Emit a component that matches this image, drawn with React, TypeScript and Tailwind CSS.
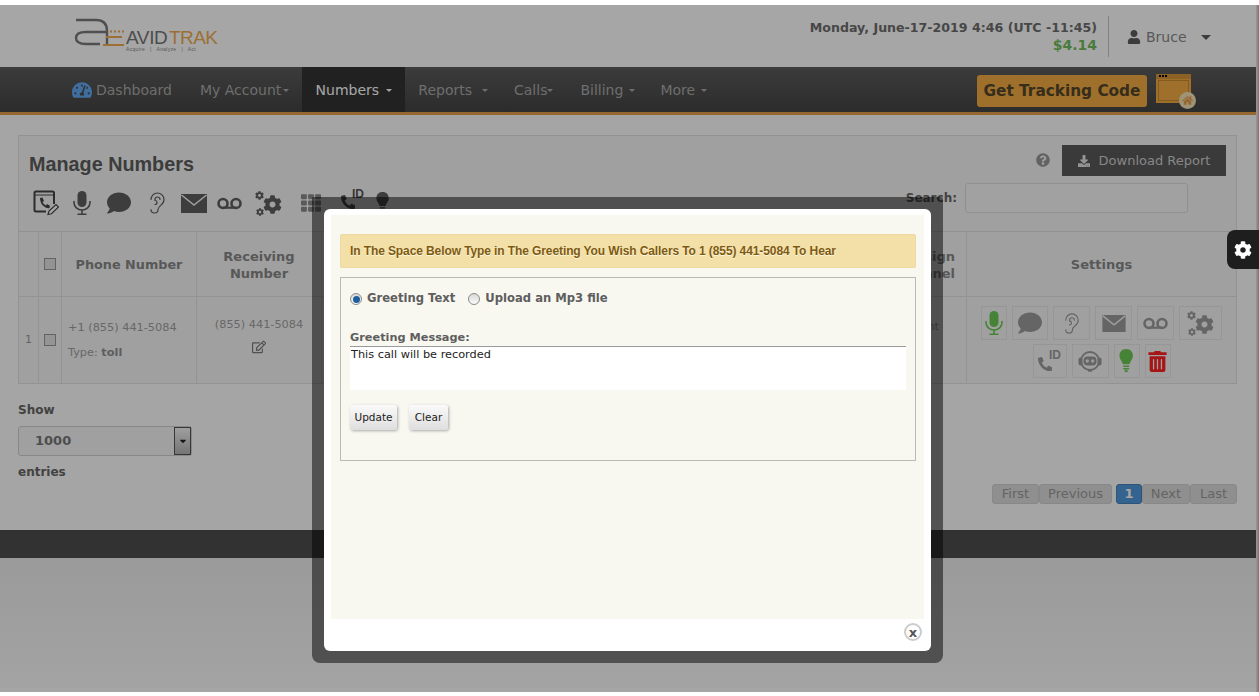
import React from "react";
import { Ear } from "lucide-react";
import {
  FaComment, FaTh, FaTrashAlt,
  FaPhoneAlt, FaTachometerAlt, FaRegEdit, FaUser, FaDownload, FaQuestionCircle, FaCog, FaHome, FaCaretDown,
} from "react-icons/fa";

function Logo() {
  return (
    <svg width="146" height="38" viewBox="0 0 146 38" className="block">
      <path d="M2 3 H22 Q33 3 33 14 V27 M33 15 H12 Q2 15 2 21 Q2 27 12 27 H26" fill="none" stroke="#7a7a7a" strokeWidth="2.4" />
      <path d="M29 28 H50 M32 20 H48" fill="none" stroke="#f0ac50" strokeWidth="2" />
      <path d="M36 14.5 H51" fill="none" stroke="#f0ac50" strokeWidth="2" strokeDasharray="2 2" />
      <text x="52" y="27" fontFamily="Liberation Sans" fontSize="19" fill="#777" letterSpacing="-0.4">AVID</text>
      <text x="95" y="27" fontFamily="Liberation Sans" fontSize="19" fill="#f0ac50" letterSpacing="-0.6">TRAK</text>
      <text x="52" y="34" fontFamily="Liberation Sans" fontSize="5" fill="#888" letterSpacing="0.3" xmlSpace="preserve">Acquire   |   Analyze   |   Act</text>
    </svg>
  );
}

function PhoneEdit() {
  return (
    <svg width="26" height="26" viewBox="0 0 26 26">
      <path d="M21 14 V3 Q21 1.500 19.500 1.500 H3 Q1.500 1.500 1.500 3 V20 Q1.500 21.500 3 21.500 H13" fill="none" stroke="#444" strokeWidth="2" />
      <path d="M1.500 5 H21" stroke="#444" strokeWidth="1" />
      <path d="M7 8 L9.500 7.500 L11 11 L9.500 12 Q10.500 14.500 13 15.500 L14 14 L17 15.800 L16.500 18 Q14 19 10.500 16 Q7 13 7 8 Z" fill="#444" />
      <path d="M15 24.500 L16 21 L23 14.500 L25.500 17 L18.500 23.800 Z" fill="#fff" stroke="#444" strokeWidth="1.200" />
    </svg>
  );
}

function Mic({ h, color }: { h: number; color: string }) {
  return (
    <svg width={h * 0.75} height={h} viewBox="0 0 18 24" className="shrink-0">
      <rect x="4.500" y="0" width="9" height="16" rx="4.500" fill={color} />
      <path d="M1 10 V11.500 A8 7.500 0 0 0 17 11.500 V10" fill="none" stroke={color} strokeWidth="1.600" />
      <path d="M9 19 V23 M4.500 23.200 H13.500" stroke={color} strokeWidth="1.600" />
    </svg>
  );
}

function Envelope({ w, h, color }: { w: number; h: number; color: string }) {
  return (
    <svg width={w} height={h} viewBox="0 0 26 19" className="shrink-0">
      <path d="M0 0 H26 V19 H0 Z" fill={color} />
      <path d="M0.500 1 L13 11 L25.500 1" fill="none" stroke="#f4f4f4" strokeWidth="1.600" />
    </svg>
  );
}

function Tape({ w, color }: { w: number; color: string }) {
  return (
    <svg width={w} height={w * 0.52} viewBox="0 0 25 13" className="shrink-0">
      <circle cx="6" cy="6.500" r="4.500" fill="none" stroke={color} strokeWidth="2.600" />
      <circle cx="19" cy="6.500" r="4.500" fill="none" stroke={color} strokeWidth="2.600" />
      <path d="M6 10.700 H19" stroke={color} strokeWidth="2.200" />
    </svg>
  );
}

function Gears({ color }: { color: string }) {
  return (
    <span className="relative block w-[27px] h-[25px]">
      <FaCog size={19} color={color} className="absolute right-0 top-[4px]" />
      <FaCog size={9} color={color} className="absolute left-0 top-0" />
      <FaCog size={8} color={color} className="absolute left-[1px] bottom-0" />
    </span>
  );
}

function Bulb({ h, color }: { h: number; color: string }) {
  return (
    <svg width={h * 0.6} height={h} viewBox="0 0 15 25" className="shrink-0">
      <path d="M7.500 0 C3 0 0.500 3 0.500 7 C0.500 11 3.500 12.500 4 16 H11 C11.500 12.500 14.500 11 14.500 7 C14.500 3 12 0 7.500 0 Z" fill={color} />
      <path d="M4.500 18 H10.500 M4.500 20.500 H10.500" stroke={color} strokeWidth="1.500" />
      <path d="M6 23 H9" stroke={color} strokeWidth="2" />
    </svg>
  );
}

function Face({ color }: { color: string }) {
  return (
    <svg width="24" height="24" viewBox="0 0 24 24" className="shrink-0">
      <circle cx="12" cy="12" r="9" fill="none" stroke={color} strokeWidth="1.800" />
      <rect x="0.500" y="8.500" width="4" height="8" rx="2" fill={color} />
      <rect x="19.500" y="8.500" width="4" height="8" rx="2" fill={color} />
      <rect x="5.500" y="7.500" width="13" height="9" rx="4" fill={color} />
      <circle cx="9.300" cy="12" r="1.700" fill="#eee" />
      <circle cx="14.700" cy="12" r="1.700" fill="#eee" />
      <path d="M10 21.500 H14" stroke={color} strokeWidth="2.400" />
    </svg>
  );
}

function CallerId({ size, color }: { size: number; color: string }) {
  return (
    <span className="relative inline-block" style={{ width: size + 3, height: size }}>
      <FaPhoneAlt size={size * 0.72} color={color} className="absolute left-0 bottom-0" />
      <span className="absolute right-0 top-[-2px] font-['Liberation_Sans'] font-bold text-[12px] leading-[13px]" style={{ color }}>ID</span>
    </span>
  );
}

function NavItem({ label, className, gap }: { label: string; className: string; gap: string }) {
  return (
    <span className={"flex items-center text-[#a9a9a9] " + className}>
      {label}
      <span className={gap + " w-0 h-0 border-x-[3px] border-x-transparent border-t-[3px] border-t-[#a9a9a9]"} />
    </span>
  );
}

function SetBtn({ w, children }: { w: number; children: React.ReactNode }) {
  return (
    <span className="h-[34px] flex items-center justify-center border border-[#e6e6e6]" style={{ width: w }}>
      {children}
    </span>
  );
}

function PageBtn({ label, w }: { label: string; w: number }) {
  return (
    <span className="h-[20px] flex items-center justify-center rounded-[3px] bg-[#dcdcdc] border border-[#d2d2d2] text-[13px] text-[#9a9a9a]" style={{ width: w }}>
      {label}
    </span>
  );
}

function Radio({ on }: { on: boolean }) {
  return (
    <span className="w-[12px] h-[12px] rounded-full border border-[#8c8c8c] flex items-center justify-center bg-gradient-to-b from-[#d8d8d8] to-[#fbfbfb] shrink-0">
      {on && <span className="w-[7px] h-[7px] rounded-full bg-[#1d5f9c]" />}
    </span>
  );
}

export default function App() {
  return (
    <div className="relative w-[1259px] h-[696px] overflow-hidden bg-white font-['DejaVu_Sans',sans-serif] text-[#6a6a6a]">
      <div className="h-[5px] bg-white" />
      <header className="h-[62px] flex items-center bg-white">
        <div className="ml-[74px] mt-[-1px]"><Logo /></div>
        <div className="ml-auto mr-[48px] flex items-center h-[42px]">
          <div className="text-right pr-[11px] pt-[2px]">
            <div className="text-[12.600px] font-bold text-[#6e6e6e] leading-[16px]">Monday, June-17-2019 4:46 (UTC -11:45)</div>
            <div className="text-[14px] font-bold text-[#71bd5c] leading-[18px]">$4.14</div>
          </div>
          <div className="w-px h-[41px] bg-[#c8c8c8]" />
          <div className="flex items-center pl-[18px] pt-[2px] text-[14px] text-[#888] w-[102px]">
            <FaUser size={14} color="#5c5c5c" className="mr-[5px]" />
            Bruce
            <span className="ml-[14px] w-0 h-0 border-x-[5px] border-x-transparent border-t-[5px] border-t-[#5c5c5c]" />
          </div>
        </div>
      </header>
      <nav className="h-[48px] flex items-stretch bg-gradient-to-b from-[#5c5c5c] to-[#444] border-b-[3px] border-[#e6a04a] text-[14px]">
        <span className="flex items-center ml-[72px] pt-[1px] text-[#a9a9a9]">
          <FaTachometerAlt size={20} color="#62aaf5" className="mr-[4px]" />Dashboard
        </span>
        <NavItem label="My Account" className="ml-[28px] pt-[1px]" gap="ml-[2px]" />
        <span className="ml-[13px] w-[103px] bg-[#333] flex items-center justify-center pt-[1px] text-white">
          Numbers<span className="ml-[7px] w-0 h-0 border-x-[3px] border-x-transparent border-t-[3px] border-t-white" />
        </span>
        <NavItem label="Reports" className="ml-[13px] pt-[1px]" gap="ml-[10px]" />
        <NavItem label="Calls" className="ml-[26px] pt-[1px]" gap="ml-0" />
        <NavItem label="Billing" className="ml-[27px] pt-[1px]" gap="ml-[6px]" />
        <NavItem label="More" className="ml-[25px] pt-[1px]" gap="ml-[6px]" />
        <div className="ml-auto mr-[68px] flex items-start pt-[7px]">
          <span className="w-[170px] h-[32px] mt-[1px] rounded-[3px] bg-[#f4ad42] flex items-center justify-center text-[15.300px] font-bold text-[#55462c]">Get Tracking Code</span>
          <span className="relative ml-[9px] w-[35px] h-[29px] bg-[#f4ad42] border-t-[5px] border-[#d89636]">
            <span className="absolute left-[3px] top-[-4px] flex gap-[1px]">
              <span className="w-[2px] h-[2px] bg-black" />
              <span className="w-[2px] h-[2px] bg-black" />
              <span className="w-[2px] h-[2px] bg-black" />
            </span>
            <span className="absolute inset-x-[2px] top-[1px] bottom-[2px] border border-[#c98a30]" />
            <span className="absolute right-[-5px] bottom-[-6px] w-[17px] h-[17px] rounded-full bg-[#f5e2b8] flex items-center justify-center">
              <FaHome size={11} color="#e6a04a" />
            </span>
          </span>
        </div>
      </nav>
      <main className="h-[415px] bg-[#fdfdfd] px-[18px] pt-[20px] pr-[22px]">
        <section className="border border-[#e2e2e2] bg-[#f6f6f6]">
          <div className="h-[95px] flex justify-between relative">
            <div className="pl-[10px] pt-[16px]">
              <h1 className="font-['Liberation_Sans'] font-bold text-[19.800px] leading-[24px] text-[#5c5c5c]">Manage Numbers</h1>
              <div className="flex items-center h-[30px] mt-[12px] pl-[4px] text-[#5f5f5f]">
                <PhoneEdit />
                <span className="ml-[14px] w-[18px] flex justify-center"><Mic h={24} color="#5f5f5f" /></span>
                <span className="ml-[16px] w-[24px] flex justify-center"><FaComment size={24} /></span>
                <span className="ml-[14px] w-[24px] flex justify-center"><Ear size={24} strokeWidth={1.2} className="shrink-0" /></span>
                <span className="ml-[12px]"><Envelope w={26} h={19} color="#5f5f5f" /></span>
                <span className="ml-[10px]"><Tape w={25} color="#5f5f5f" /></span>
                <span className="ml-[13px]"><Gears color="#5f5f5f" /></span>
                <span className="ml-[19px]"><FaTh size={20} color="#8a8a8a" /></span>
                <span className="ml-[20px]"><CallerId size={20} color="#555" /></span>
                <span className="ml-[12px]"><Bulb h={22} color="#5f5f5f" /></span>
              </div>
            </div>
            <div className="pr-[10px] pt-[9px] flex flex-col items-end">
              <div className="flex items-center">
                <FaQuestionCircle size={14} color="#999" className="mr-[12px] mt-[-2px]" />
                <span className="w-[164px] h-[31px] bg-[#595959] flex items-center justify-center text-[13px] text-[#cfcfcf]">
                  <FaDownload size={12} color="#e4e4e4" className="mr-[9px]" />Download Report
                </span>
              </div>
              <div className="flex items-center mt-[7px] mr-[38px]">
                <span className="text-[12px] font-bold text-[#666] mr-[8px]">Search:</span>
                <span className="w-[223px] h-[30px] rounded-[3px] border border-[#dcdcdc] bg-[#f8f8f8]" />
              </div>
            </div>
          </div>
          <div className="grid grid-cols-[20px_23px_135px_125px_1fr_269px] border-t border-[#dedede] text-center">
            <div className="h-[64px] border-r border-[#e2e2e2]" />
            <div className="h-[64px] border-r border-[#e2e2e2] flex items-center justify-center">
              <span className="w-[12px] h-[12px] border border-[#999] bg-[#e4e4e4]" />
            </div>
            <div className="h-[64px] border-r border-[#e2e2e2] flex items-center justify-center pt-[1px] text-[12.800px] font-bold text-[#888]">Phone Number</div>
            <div className="h-[64px] border-r border-[#e2e2e2] flex items-center justify-center pt-[1px] text-[13px] font-bold text-[#888] leading-[17px]">Receiving<br />Number</div>
            <div className="h-[64px] border-r border-[#e2e2e2] flex items-center justify-end pt-[1px] pr-[11px] text-[13px] font-bold text-[#888] leading-[17px] text-right">Assign<br />Channel</div>
            <div className="h-[64px] flex items-center justify-center pt-[1px] text-[13px] font-bold text-[#888]">Settings</div>

            <div className="h-[87px] border-t border-r border-[#e2e2e2] flex items-center justify-center text-[11px] text-[#999]">1</div>
            <div className="h-[87px] border-t border-r border-[#e2e2e2] flex items-center justify-center">
              <span className="w-[12px] h-[12px] border border-[#999] bg-[#e4e4e4]" />
            </div>
            <div className="h-[87px] border-t border-r border-[#e2e2e2] text-left pl-[6px] pt-[23px] text-[11.300px] text-[#a0a0a0]">
              <div className="leading-[16px]">+1 (855) 441-5084</div>
              <div className="leading-[16px] mt-[9px]">Type: <b className="text-[#909090]">toll</b></div>
            </div>
            <div className="h-[87px] border-t border-r border-[#e2e2e2] pt-[20px] text-[11.300px] text-[#a0a0a0]">
              <div className="leading-[16px]">(855) 441-5084</div>
              <FaRegEdit size={14} color="#7c7c7c" className="mx-auto mt-[7px]" />
            </div>
            <div className="h-[87px] border-t border-r border-[#e2e2e2] text-right pr-[27px] pt-[22px] text-[11.300px] text-[#a0a0a0] leading-[16px]">nt</div>
            <div className="h-[87px] border-t border-[#e2e2e2] pt-[9px] flex flex-col items-center gap-[4px] text-[#9c9c9c]">
              <div className="flex gap-[5px]">
                <SetBtn w={26}><Mic h={24} color="#6cc955" /></SetBtn>
                <SetBtn w={36}><FaComment size={24} /></SetBtn>
                <SetBtn w={37}><Ear size={23} strokeWidth={1.2} className="shrink-0" /></SetBtn>
                <SetBtn w={37}><Envelope w={24} h={17} color="#9c9c9c" /></SetBtn>
                <SetBtn w={37}><Tape w={25} color="#9c9c9c" /></SetBtn>
                <SetBtn w={43}><Gears color="#9c9c9c" /></SetBtn>
              </div>
              <div className="flex items-center gap-[5px]">
                <SetBtn w={34}><CallerId size={20} color="#9c9c9c" /></SetBtn>
                <SetBtn w={37}><Face color="#9c9c9c" /></SetBtn>
                <SetBtn w={26}><Bulb h={24} color="#6cc955" /></SetBtn>
                <SetBtn w={26}><FaTrashAlt size={21} color="#ff2222" /></SetBtn>
              </div>
            </div>
          </div>
        </section>
        <div className="mt-[18px] flex justify-between">
          <div>
            <div className="text-[12px] font-bold text-[#666] leading-[16px]">Show</div>
            <div className="mt-[8px] w-[174px] h-[30px] rounded-[3px] border border-[#d2d2d2] bg-[#f6f6f6] flex items-center justify-between text-[13px] font-bold text-[#777] pl-[16px]">
              1000
              <span className="w-[17px] h-[28px] border border-[#555] bg-gradient-to-b from-[#f4f4f4] to-[#b4b4b4] flex items-center justify-center">
                <FaCaretDown size={10} color="#222" />
              </span>
            </div>
            <div className="mt-[8px] text-[12px] font-bold text-[#666] leading-[16px]">entries</div>
          </div>
          <div className="flex items-center h-[20px] mt-[82px]">
            <PageBtn label="First" w={47} />
            <PageBtn label="Previous" w={73} />
            <span className="ml-[4px] w-[26px] h-[20px] rounded-[3px] bg-[#5298dc] border border-[#4682bb] flex items-center justify-center text-[13px] font-bold text-white">1</span>
            <PageBtn label="Next" w={48} />
            <PageBtn label="Last" w={47} />
          </div>
        </div>
      </main>
      <footer className="h-[28px] bg-[#4d4d4d]" />
      <div className="h-[130px] bg-gradient-to-b from-[#ededed] to-[#fbfbfb]" />

      {/* dim overlay */}
      <div className="absolute inset-x-0 top-[5px] h-[687px] bg-black/35" />
      <div className="absolute right-0 top-[5px] w-[3px] h-[687px] bg-gradient-to-r from-[#9a9a9a] to-[#777]" />
      <div className="absolute left-0 right-0 bottom-0 h-[4px] bg-white" />

      {/* gear tab */}
      <div className="absolute left-[1227px] top-[230px] w-[32px] h-[39px] rounded-l-[8px] bg-[#1e1e1e] flex items-center pl-[7px]">
        <FaCog size={18} color="#fff" />
      </div>

      {/* modal */}
      <div className="absolute left-[312px] top-[197px] w-[631px] h-[466px] rounded-b-[8px] rounded-t-[2px] bg-black/50 p-[12px]">
        <div className="h-[442px] rounded-[6px] bg-white px-[7px] pt-[6px] relative">
          <div className="h-[404px] bg-[#f8f7f0] pt-[19px] px-[9px]">
            <div className="h-[34px] w-[576px] rounded-[2px] border border-[#eed9a0] bg-[#f3e0a8] pl-[9px] flex items-center font-['Liberation_Sans'] text-[12px] font-bold tracking-[-0.1px] text-[#7d5a12] [text-shadow:0_1px_0_#fff6dc]">
              In The Space Below Type in The Greeting You Wish Callers To 1 (855) 441-5084 To Hear
            </div>
            <div className="mt-[9px] w-[576px] h-[184px] border border-[#b9b9b6] px-[9px] pt-[14px]">
              <div className="flex items-center text-[11.600px] font-bold text-[#5e5e5e] h-[14px]">
                <Radio on />
                <span className="ml-[5px]">Greeting Text</span>
                <span className="ml-[13px]"><Radio on={false} /></span>
                <span className="ml-[5px]">Upload an Mp3 file</span>
              </div>
              <div className="mt-[25px] text-[11.300px] font-bold text-[#5e5e5e] leading-[14px]">Greeting Message:</div>
              <textarea
                readOnly
                defaultValue="This call will be recorded"
                className="block mt-[1px] w-[556px] h-[44px] bg-white border-t border-[#9a9a9a] resize-none outline-none pl-[1px] pt-[1px] text-[11.300px] leading-[13px] text-[#222] font-['DejaVu_Sans',sans-serif]"
              />
              <div className="flex mt-[15px] gap-[12px]">
                <button className="w-[47px] h-[25px] rounded-[3px] bg-gradient-to-b from-[#fafafa] to-[#dedede] shadow-[1px_1px_3px_#aaa] text-[10.500px] text-[#222]">Update</button>
                <button className="w-[39px] h-[25px] rounded-[3px] bg-gradient-to-b from-[#fafafa] to-[#dedede] shadow-[1px_1px_3px_#aaa] text-[10.500px] text-[#222]">Clear</button>
              </div>
            </div>
          </div>
          <span className="absolute right-[9px] bottom-[10px] w-[18px] h-[18px] rounded-full border-2 border-[#ccc] bg-white flex items-center justify-center text-[13px] font-bold leading-none text-[#555]">x</span>
        </div>
      </div>
    </div>
  );
}
